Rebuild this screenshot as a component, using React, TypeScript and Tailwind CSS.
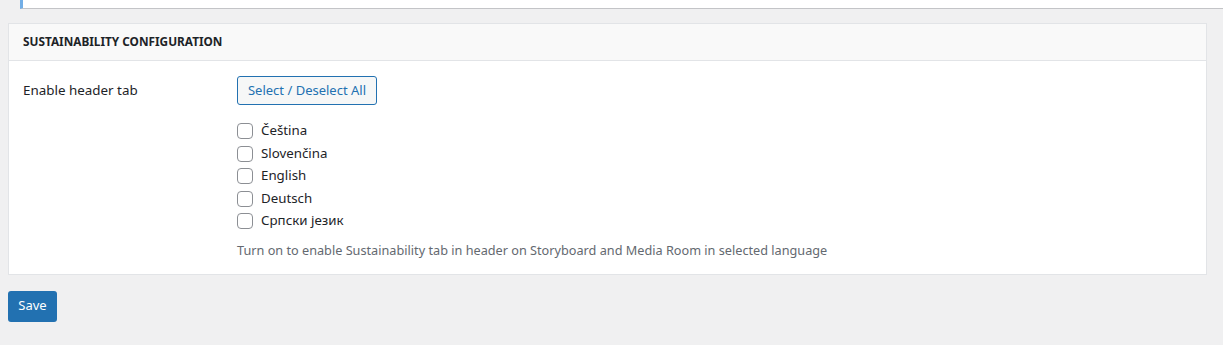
import React from "react";

const langs = ["Čeština", "Slovenčina", "English", "Deutsch", "Српски језик"];

export default function App() {
  return (
    <div className="min-h-[345px] w-full bg-[#f0f0f1] text-[#1d2327]" style={{ fontFamily: '"Noto Sans", "Open Sans", sans-serif' }}>
      <div className="ml-[20px] h-[9px] border-l-[3px] border-[#72aee6] border-b border-b-[#c3c4c7] bg-white" />
      <div className="mx-[8px] mt-[14px] w-[1199px] border border-[#e2e4e7] bg-white">
        <div className="flex h-[37px] items-center border-b border-[#e2e4e7] bg-[#f9f9f9] px-[14px]">
          <h2 className="text-[11.8px] font-bold uppercase">Sustainability Configuration</h2>
        </div>
        <div className="flex px-[14px] pt-[15px] pb-[14px]">
          <div className="w-[214px] pt-[4px] text-[13.4px] leading-[20px]">Enable header tab</div>
          <div className="flex flex-col">
            <button className="h-[29px] w-[140px] rounded-[3px] border border-[#2271b1] bg-[#f6f7f7] pt-[1px] text-[13px] text-[#2271b1]">
              Select / Deselect All
            </button>
            <div className="mt-[15px] flex flex-col">
              {langs.map((l) => (
                <label key={l} className="flex h-[22.5px] items-center gap-[8px] text-[13.3px]">
                  <span className="h-[16px] w-[16px] rounded-[4px] border border-[#8c8f94] bg-white" />
                  <span>{l}</span>
                </label>
              ))}
            </div>
            <p className="mt-[8px] text-[12.7px] text-[#646970]">
              Turn on to enable Sustainability tab in header on Storyboard and Media Room in selected language
            </p>
          </div>
        </div>
      </div>
      <div className="ml-[8px] mt-[16px]">
        <button className="h-[31px] w-[49px] rounded-[3px] bg-[#2271b1] text-[13px] text-white">Save</button>
      </div>
    </div>
  );
}
